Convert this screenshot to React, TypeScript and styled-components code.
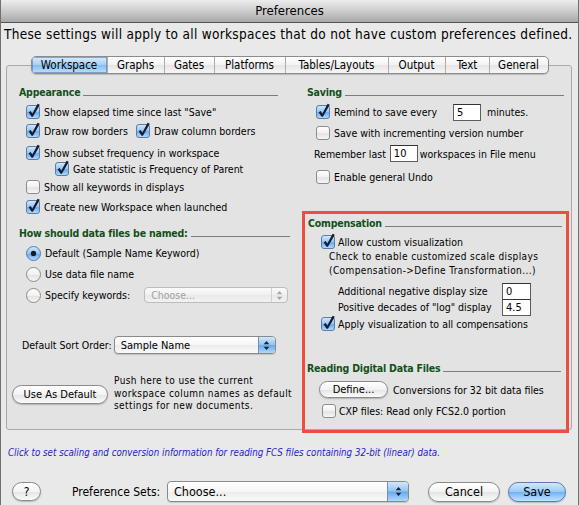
import React from "react";
import styled, { createGlobalStyle } from "styled-components";

const FONT = `"DejaVu Sans Condensed", "Liberation Sans", Arial, sans-serif`;

const GlobalStyle = createGlobalStyle`
  html, body {
    margin: 0;
    padding: 0;
    background: #e9e9e9;
  }
  body {
    font-family: ${FONT};
    color: #000;
  }
  * {
    box-sizing: border-box;
  }
`;

const Window = styled.div`
  width: 579px;
  height: 505px;
  background: #e9e9e9;
  border-left: 1px solid #707070;
  border-right: 1px solid #707070;
  overflow: hidden;
  display: flex;
  flex-direction: column;
`;

const TitleBar = styled.div`
  flex-shrink: 0;
  height: 23px;
  line-height: 22px;
  background: linear-gradient(#ececec, #cdcdcd 50%, #a8a8a8);
  border-bottom: 1px solid #525252;
  font-size: 13px;
  text-align: center;
`;

const Intro = styled.div`
  height: 22px;
  line-height: 22px;
  padding-left: 3px;
  font-size: 13.5px;
  letter-spacing: 0.3px;
  white-space: nowrap;
`;

const TabsRow = styled.div`
  position: relative;
  z-index: 1;
  display: flex;
  justify-content: center;
  margin-top: 11px;
`;

const Segments = styled.div`
  display: flex;
  height: 18px;
  border: 1px solid #8c8c8c;
  border-radius: 5px;
  overflow: hidden;
  background: linear-gradient(#ffffff, #f2f2f2 50%, #e5e5e5 51%, #f7f7f7);
  box-shadow: 0 1px 1px rgba(0, 0, 0, 0.18);
`;

const Tab = styled.div<{ $w: number; $active?: boolean }>`
  width: ${(p) => p.$w}px;
  display: flex;
  align-items: center;
  justify-content: center;
  font-size: 11.5px;
  border-left: 1px solid #adadad;
  &:first-child {
    border-left: none;
  }
  background: ${(p) =>
    p.$active
      ? "linear-gradient(#d9ebfc, #a6cff5 50%, #83bdf0 51%, #bfe0fb)"
      : "transparent"};
  box-shadow: ${(p) =>
    p.$active ? "inset 0 0 0 1px rgba(70, 110, 170, 0.55)" : "none"};
`;

const Panel = styled.div`
  margin: -9px 6px 0 5px;
  height: 365px;
  border: 1px solid #a9a9a9;
  border-radius: 3px;
  background: #e3e3e3;
  padding-top: 18px;
  display: grid;
  grid-template-columns: 289px 1fr;
  align-items: start;
`;

const Column = styled.div`
  display: flex;
  flex-direction: column;
`;

const SectionHeader = styled.div<{ $indent: number; $trail: number; $mt?: number }>`
  display: flex;
  align-items: flex-end;
  height: 14px;
  margin-top: ${(p) => p.$mt ?? 0}px;
  padding-left: ${(p) => p.$indent}px;
  margin-right: ${(p) => p.$trail}px;
  font-size: 10.5px;
  letter-spacing: -0.2px;
  font-weight: bold;
  color: #12501a;
  white-space: nowrap;
  &::after {
    content: "";
    flex: 1;
    margin: 0 0 2px 3px;
    border-bottom: 1px solid #7c7c7c;
  }
`;

const Row = styled.div<{ $h?: number; $mt?: number; $indent?: number }>`
  display: flex;
  align-items: center;
  height: ${(p) => p.$h ?? 16}px;
  margin-top: ${(p) => p.$mt ?? 0}px;
  padding-left: ${(p) => p.$indent ?? 0}px;
  font-size: 10.5px;
  white-space: nowrap;
`;

const Label = styled.span<{ $ml?: number; $mr?: number }>`
  margin-left: ${(p) => p.$ml ?? 0}px;
  margin-right: ${(p) => p.$mr ?? 0}px;
`;

const Note = styled.div<{ $lh: number; $mt?: number; $indent?: number; $ml?: number }>`
  font-size: 10px;
  letter-spacing: 0.4px;
  line-height: ${(p) => p.$lh}px;
  margin-top: ${(p) => p.$mt ?? 0}px;
  padding-left: ${(p) => p.$indent ?? 0}px;
  margin-left: ${(p) => p.$ml ?? 0}px;
  white-space: nowrap;
`;

const NumField = styled.div<{ $w: number; $h?: number; $ml?: number; $mt?: number }>`
  width: ${(p) => p.$w}px;
  height: ${(p) => p.$h ?? 17}px;
  margin-left: ${(p) => p.$ml ?? 0}px;
  margin-top: ${(p) => p.$mt ?? 0}px;
  background: #fff;
  border: 1px solid #5e5e5e;
  border-top-color: #333;
  font-size: 11px;
  padding-left: 3px;
  display: flex;
  align-items: center;
  flex-shrink: 0;
`;

const FieldGrid = styled.div`
  display: grid;
  grid-template-columns: 164px 29px;
  grid-auto-rows: 16px;
  align-items: center;
  margin-top: 5px;
  padding-left: 33px;
  font-size: 10.5px;
  white-space: nowrap;
`;

const GridCell = styled.div`
  height: 17px;
  align-self: start;
`;

const HighlightBox = styled.div`
  margin: 26px 2px 0 6px;
  height: 222px;
  border: 3px solid #ef4d42;
  display: flex;
  flex-direction: column;
`;

const PushButton = styled.div<{
  $w: number;
  $h: number;
  $primary?: boolean;
  $size?: number;
  $ml?: number;
}>`
  width: ${(p) => p.$w}px;
  height: ${(p) => p.$h}px;
  margin-left: ${(p) => p.$ml ?? 0}px;
  flex-shrink: 0;
  border-radius: ${(p) => p.$h / 2}px;
  border: 1px solid ${(p) => (p.$primary ? "#5a7eae" : "#8a8a8a")};
  background: ${(p) =>
    p.$primary
      ? "linear-gradient(#d3e8fc, #98c9f5 50%, #73b3f0 51%, #c2e3fd)"
      : "linear-gradient(#ffffff, #f3f3f3 50%, #e4e4e4 51%, #fbfbfb)"};
  box-shadow: 0 1px 1.5px rgba(0, 0, 0, 0.22);
  display: flex;
  align-items: center;
  justify-content: center;
  font-size: ${(p) => p.$size ?? 11}px;
`;

const Popup = styled.div<{ $w: number; $h: number; $disabled?: boolean; $ml?: number }>`
  display: flex;
  width: ${(p) => p.$w}px;
  height: ${(p) => p.$h}px;
  margin-left: ${(p) => p.$ml ?? 0}px;
  flex-shrink: 0;
  border: 1px solid ${(p) => (p.$disabled ? "#bcbcbc" : "#8a8a8a")};
  border-radius: 4px;
  overflow: hidden;
  background: ${(p) =>
    p.$disabled
      ? "linear-gradient(#fafafa, #f0f0f0 50%, #e9e9e9 51%, #f2f2f2)"
      : "linear-gradient(#ffffff, #f5f5f5 50%, #ebebeb 51%, #f9f9f9)"};
  box-shadow: ${(p) => (p.$disabled ? "none" : "0 1px 1px rgba(0, 0, 0, 0.15)")};
`;

const PopupText = styled.span<{ $disabled?: boolean; $size: number }>`
  flex: 1;
  display: flex;
  align-items: center;
  padding-left: 6px;
  font-size: ${(p) => p.$size}px;
  color: ${(p) => (p.$disabled ? "#a0a0a0" : "#000")};
  white-space: nowrap;
`;

const PopupArrows = styled.div<{ $w: number; $disabled?: boolean }>`
  width: ${(p) => p.$w}px;
  display: flex;
  align-items: center;
  justify-content: center;
  border-left: 1px solid ${(p) => (p.$disabled ? "#d0d0d0" : "#6f8fb9")};
  background: ${(p) =>
    p.$disabled
      ? "transparent"
      : "linear-gradient(#d3e7fb, #93c5f3 48%, #68a9ed 52%, #aed9fb)"};
`;

const FootNote = styled.div`
  margin-top: 16px;
  height: 14px;
  line-height: 14px;
  padding-left: 7px;
  font-size: 9.7px;
  font-style: italic;
  color: #2424c8;
  white-space: nowrap;
`;

const BottomBar = styled.div`
  display: flex;
  align-items: center;
  height: 21px;
  margin-top: 21px;
  padding-left: 11px;
`;

const BarLabel = styled.span`
  width: 95px;
  margin-left: 31px;
  font-size: 12px;
  white-space: nowrap;
`;

const IconSvg = styled.svg<{ $mr?: number; $ml?: number }>`
  flex-shrink: 0;
  overflow: visible;
  margin-right: ${(p) => p.$mr ?? 4}px;
  margin-left: ${(p) => p.$ml ?? 0}px;
`;

const Defs = styled.svg`
  position: absolute;
  width: 0;
  height: 0;
`;

const GradientDefs = () => (
  <Defs aria-hidden="true">
    <defs>
      <linearGradient id="aquaWhite" x1="0" y1="0" x2="0" y2="1">
        <stop offset="0" stopColor="#ffffff" />
        <stop offset="0.5" stopColor="#f1f1f1" />
        <stop offset="0.55" stopColor="#e3e3e3" />
        <stop offset="1" stopColor="#f8f8f8" />
      </linearGradient>
      <linearGradient id="aquaBlue" x1="0" y1="0" x2="0" y2="1">
        <stop offset="0" stopColor="#d6e9fc" />
        <stop offset="0.5" stopColor="#94c5f3" />
        <stop offset="0.55" stopColor="#6aabee" />
        <stop offset="1" stopColor="#b8defd" />
      </linearGradient>
    </defs>
  </Defs>
);

const CheckBox = ({ checked, mr, ml }: { checked?: boolean; mr?: number; ml?: number }) => (
  <IconSvg width="14" height="14" viewBox="0 0 14 14" $mr={mr} $ml={ml}>
    <rect
      x="0.5"
      y="0.5"
      width="13"
      height="13"
      rx="2.5"
      fill={checked ? "url(#aquaBlue)" : "url(#aquaWhite)"}
      stroke={checked ? "#5a7ca6" : "#8c8c8c"}
    />
    {checked && (
      <path
        d="M2.6 7.3 L4.7 6 L6.3 8.7 L11.6 -1.2 L13.8 -0.3 L6.9 11.8 L5.6 11.8 Z"
        fill="#161b2e"
      />
    )}
  </IconSvg>
);

const Radio = ({ selected }: { selected?: boolean }) => (
  <IconSvg width="15" height="15" viewBox="0 0 15 15" $mr={4}>
    <circle
      cx="7.5"
      cy="7.5"
      r="7"
      fill={selected ? "url(#aquaBlue)" : "url(#aquaWhite)"}
      stroke={selected ? "#5a7ca6" : "#8a8a8a"}
    />
    {selected && <circle cx="7.5" cy="7.5" r="2.7" fill="#161b2e" />}
  </IconSvg>
);

const UpDown = ({ color }: { color: string }) => (
  <svg width="7" height="11" viewBox="0 0 7 11">
    <path d="M3.5 1 L6.3 4.2 L0.7 4.2 Z M0.7 6.8 L6.3 6.8 L3.5 10 Z" fill={color} />
  </svg>
);

const PopupButton = ({
  text,
  w,
  h,
  arrowW,
  size,
  disabled,
  ml,
}: {
  text: string;
  w: number;
  h: number;
  arrowW: number;
  size: number;
  disabled?: boolean;
  ml?: number;
}) => (
  <Popup $w={w} $h={h} $disabled={disabled} $ml={ml}>
    <PopupText $disabled={disabled} $size={size}>
      {text}
    </PopupText>
    <PopupArrows $w={arrowW} $disabled={disabled}>
      <UpDown color={disabled ? "#a8a8a8" : "#1c2333"} />
    </PopupArrows>
  </Popup>
);

const tabs = [
  { label: "Workspace", w: 75 },
  { label: "Graphs", w: 57 },
  { label: "Gates", w: 50 },
  { label: "Platforms", w: 71 },
  { label: "Tables/Layouts", w: 103 },
  { label: "Output", w: 57 },
  { label: "Text", w: 44 },
  { label: "General", w: 59 },
];

export default function App() {
  return (
    <>
      <GlobalStyle />
      <GradientDefs />
      <Window>
        <TitleBar>Preferences</TitleBar>
        <Intro>
          These settings will apply to all workspaces that do not have custom preferences defined.
        </Intro>

        <TabsRow>
          <Segments>
            {tabs.map((t, i) => (
              <Tab key={t.label} $w={t.w} $active={i === 0}>
                {t.label}
              </Tab>
            ))}
          </Segments>
        </TabsRow>

        <Panel>
          <Column>
            <SectionHeader $indent={12} $trail={18}>
              Appearance
            </SectionHeader>
            <Row $mt={6} $indent={19}>
              <CheckBox checked />
              <Label>Show elapsed time since last "Save"</Label>
            </Row>
            <Row $mt={3} $indent={19}>
              <CheckBox checked />
              <Label>Draw row borders</Label>
              <CheckBox checked ml={8} />
              <Label>Draw column borders</Label>
            </Row>
            <Row $mt={6} $indent={19}>
              <CheckBox checked />
              <Label>Show subset frequency in workspace</Label>
            </Row>
            <Row $indent={48}>
              <CheckBox checked />
              <Label>Gate statistic is Frequency of Parent</Label>
            </Row>
            <Row $mt={2} $indent={19}>
              <CheckBox />
              <Label>Show all keywords in displays</Label>
            </Row>
            <Row $mt={4} $indent={19}>
              <CheckBox checked />
              <Label>Create new Workspace when launched</Label>
            </Row>

            <SectionHeader $indent={12} $trail={6} $mt={10}>
              How should data files be named:
            </SectionHeader>
            <Row $h={18} $mt={5} $indent={19}>
              <Radio selected />
              <Label>Default (Sample Name Keyword)</Label>
            </Row>
            <Row $h={18} $mt={3} $indent={19}>
              <Radio />
              <Label>Use data file name</Label>
            </Row>
            <Row $h={18} $mt={3} $indent={19}>
              <Radio />
              <Label>Specify keywords:</Label>
              <PopupButton text="Choose..." w={144} h={16} arrowW={16} size={10.5} disabled ml={14} />
            </Row>

            <Row $h={20} $mt={31} $indent={15}>
              <Label $mr={2}>Default Sort Order:</Label>
              <PopupButton text="Sample Name" w={162} h={18} arrowW={17} size={11} />
            </Row>

            <Row $h={38} $mt={20} $indent={5}>
              <PushButton $w={96} $h={19} $size={11}>
                Use As Default
              </PushButton>
              <Note $lh={12.5} $ml={6}>
                Push here to use the current
                <br />
                workspace column names as default
                <br />
                settings for new documents.
              </Note>
            </Row>
          </Column>

          <Column>
            <SectionHeader $indent={11} $trail={7}>
              Saving
            </SectionHeader>
            <Row $h={18} $mt={5} $indent={20}>
              <CheckBox checked />
              <Label>Remind to save every</Label>
              <NumField $w={28} $ml={16}>5</NumField>
              <Label $ml={6}>minutes.</Label>
            </Row>
            <Row $mt={4} $indent={20}>
              <CheckBox />
              <Label>Save with incrementing version number</Label>
            </Row>
            <Row $h={17} $mt={4} $indent={18}>
              <Label $mr={4}>Remember last</Label>
              <NumField $w={28}>10</NumField>
              <Label $ml={2}>workspaces in File menu</Label>
            </Row>
            <Row $mt={7} $indent={20}>
              <CheckBox />
              <Label>Enable general Undo</Label>
            </Row>

            <HighlightBox>
              <SectionHeader $indent={3} $trail={4} $mt={1}>
                Compensation
              </SectionHeader>
              <Row $mt={5} $indent={16}>
                <CheckBox checked mr={3} />
                <Label>Allow custom visualization</Label>
              </Row>
              <Note $lh={14} $indent={24}>
                Check to enable customized scale displays
                <br />
                (Compensation-&gt;Define Transformation...)
              </Note>
              <FieldGrid>
                <Label>Additional negative display size</Label>
                <GridCell>
                  <NumField $w={29}>0</NumField>
                </GridCell>
                <Label>Positive decades of "log" display</Label>
                <GridCell>
                  <NumField $w={29}>4.5</NumField>
                </GridCell>
              </FieldGrid>
              <Row $mt={1} $indent={16}>
                <CheckBox checked mr={3} />
                <Label>Apply visualization to all compensations</Label>
              </Row>

              <SectionHeader $indent={2} $trail={5} $mt={28}>
                Reading Digital Data Files
              </SectionHeader>
              <Row $h={17} $mt={7} $indent={14}>
                <PushButton $w={69} $h={17} $size={11}>
                  Define...
                </PushButton>
                <Label $ml={5}>Conversions for 32 bit data files</Label>
              </Row>
              <Row $mt={5} $indent={17}>
                <CheckBox mr={3} />
                <Label>CXP files: Read only FCS2.0 portion</Label>
              </Row>
            </HighlightBox>
          </Column>
        </Panel>

        <FootNote>
          Click to set scaling and conversion information for reading FCS files containing 32-bit (linear) data.
        </FootNote>

        <BottomBar>
          <PushButton $w={29} $h={19} $size={12}>
            ?
          </PushButton>
          <BarLabel>Preference Sets:</BarLabel>
          <PopupButton text="Choose..." w={242} h={21} arrowW={21} size={12.5} ml={0} />
          <PushButton $w={72} $h={20} $size={12.5} $ml={19}>
            Cancel
          </PushButton>
          <PushButton $w={58} $h={20} $size={12.5} $ml={8} $primary>
            Save
          </PushButton>
        </BottomBar>
      </Window>
    </>
  );
}
